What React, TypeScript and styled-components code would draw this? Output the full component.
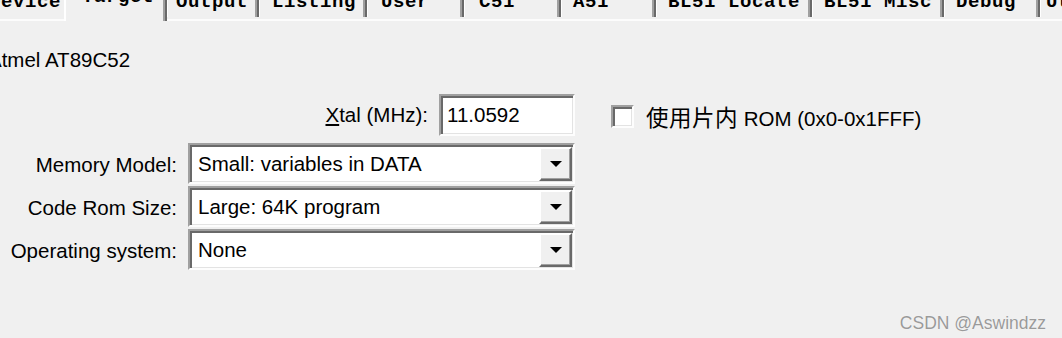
import styled, { createGlobalStyle } from "styled-components";

const GlobalStyle = createGlobalStyle`
  html, body {
    margin: 0;
    padding: 0;
    background: #f0f0f0;
  }
  body {
    font-family: "Liberation Sans", Arial, sans-serif;
    color: #000;
  }
`;

interface ITab {
  label: string;
  width: number;
  pad: number;
  active?: boolean;
  edge?: boolean;
}

const tabs: ITab[] = [
  { label: "Device", width: 87, pad: 11, edge: true },
  { label: "Target", width: 103, pad: 16, active: true },
  { label: "Output", width: 92, pad: 8 },
  { label: "Listing", width: 108, pad: 12 },
  { label: "User", width: 97, pad: 13 },
  { label: "C51", width: 97, pad: 14 },
  { label: "A51", width: 95, pad: 11 },
  { label: "BL51 Locate", width: 156, pad: 11 },
  { label: "BL51 Misc", width: 132, pad: 11 },
  { label: "Debug", width: 96, pad: 11 },
  { label: "Utilities", width: 120, pad: 5 },
];

const combos = [
  { label: "Memory Model:", value: "Small: variables in DATA" },
  { label: "Code Rom Size:", value: "Large: 64K program" },
  { label: "Operating system:", value: "None" },
];

export default function App() {
  return (
    <>
      <GlobalStyle />
      <Page>
        <TabStrip>
          {tabs.map((t) => (
            <Tab
              key={t.label}
              $width={t.width}
              $pad={t.pad}
              $active={t.active}
              $edge={t.edge}
            >
              <TabText $active={t.active}>{t.label}</TabText>
            </Tab>
          ))}
        </TabStrip>

        <Panel>
          <DeviceName>Atmel AT89C52</DeviceName>
          <Form>
            <span />
            <XtalField>
              <span>
                <u>X</u>tal (MHz):
              </span>
              <TextBox>11.0592</TextBox>
            </XtalField>
            <CheckField>
              <CheckBox />
              <span>
                <Cjk>使用片内</Cjk> ROM (0x0-0x1FFF)
              </span>
            </CheckField>

            {combos.map((c) => (
              <ComboRow key={c.label}>
                <Label>{c.label}</Label>
                <Combo>
                  <ComboValue>{c.value}</ComboValue>
                  <DropButton>
                    <Arrow />
                  </DropButton>
                </Combo>
                <span />
              </ComboRow>
            ))}
          </Form>
        </Panel>

        <Watermark>CSDN @Aswindzz</Watermark>
      </Page>
    </>
  );
}

const Page = styled.div`
  position: relative;
  width: 1062px;
  height: 338px;
  overflow: hidden;
  background: #f0f0f0;
`;

const TabStrip = styled.div`
  display: flex;
  align-items: flex-start;
  height: 21px;
  margin-left: -23px;
  background: linear-gradient(to bottom, #f0f0f0 19px, #fcfcfc 19px);
`;

const Tab = styled.div<{
  $width: number;
  $pad: number;
  $active?: boolean;
  $edge?: boolean;
}>`
  flex: none;
  box-sizing: border-box;
  width: ${(p) => p.$width}px;
  height: ${(p) => (p.$active ? 21 : 17)}px;
  padding-left: ${(p) => p.$pad}px;
  overflow: hidden;
  background: #f0f0f0;
  border-left: ${(p) => (p.$active ? "2px solid #fff" : "1px solid #fff")};
  border-right: ${(p) => (p.$edge ? "none" : "2px solid #696969")};
  box-shadow: ${(p) => (p.$edge ? "none" : "inset -2px 0 0 #a0a0a0")};
  font-family: "Liberation Mono", "Courier New", monospace;
  font-weight: bold;
  font-size: 19px;
  line-height: 19px;
  letter-spacing: 0.6px;
  white-space: pre;
`;

const TabText = styled.span<{ $active?: boolean }>`
  display: block;
  margin-top: ${(p) => (p.$active ? -12 : -7)}px;
`;

const Panel = styled.main`
  display: flex;
  flex-direction: column;
  padding-top: 27px;
  font-size: 20.5px;
`;

const DeviceName = styled.div`
  margin-left: -12px;
  line-height: 24px;
`;

const Form = styled.div`
  display: grid;
  grid-template-columns: 177px 387px 1fr;
  column-gap: 11px;
  margin-top: 22px;
  row-gap: 2px;
`;

const XtalField = styled.div`
  display: flex;
  align-items: center;
  justify-content: flex-end;
  gap: 11px;
  margin-bottom: 5px;
`;

const sunken = `
  box-sizing: border-box;
  background: #fff;
  border: 2px solid;
  border-color: #a0a0a0 #fdfdfd #fdfdfd #a0a0a0;
  box-shadow: inset 2px 2px 0 #696969, inset -1px -1px 0 #e3e3e3;
`;

const TextBox = styled.div`
  ${sunken}
  width: 136px;
  height: 42px;
  padding: 0 6px;
  display: flex;
  align-items: center;
`;

const CheckField = styled.label`
  display: flex;
  align-items: center;
  gap: 12px;
  margin-left: 25px;
  align-self: start;
  margin-top: 6px;
  white-space: nowrap;
`;

const CheckBox = styled.span`
  ${sunken}
  display: block;
  width: 23px;
  height: 23px;
`;

const Cjk = styled.span`
  font-family: "Noto Sans CJK SC", "Noto Sans CJK JP", sans-serif;
  font-size: 22.5px;
  letter-spacing: 0.5px;
`;

const ComboRow = styled.div`
  display: contents;
`;

const Label = styled.div`
  align-self: center;
  text-align: right;
  padding-top: 3px;
  white-space: nowrap;
`;

const Combo = styled.div`
  ${sunken}
  display: flex;
  align-items: stretch;
  height: 41px;
  padding: 2px 1px 1px 2px;
`;

const ComboValue = styled.div`
  flex: 1;
  display: flex;
  align-items: center;
  padding-left: 6px;
  white-space: nowrap;
`;

const DropButton = styled.div`
  box-sizing: border-box;
  flex: none;
  width: 33px;
  display: flex;
  align-items: center;
  justify-content: center;
  background: #f0f0f0;
  border: 2px solid;
  border-color: #fff #696969 #696969 #fff;
  box-shadow: inset -1px -1px 0 #a0a0a0;
`;

const Arrow = styled.span`
  width: 0;
  height: 0;
  border-left: 6px solid transparent;
  border-right: 6px solid transparent;
  border-top: 6px solid #000;
`;

const Watermark = styled.div`
  position: absolute;
  right: 16px;
  bottom: 4px;
  font-size: 17.5px;
  color: #9a9a9a;
  text-shadow: 0 0 1px #fff;
`;
